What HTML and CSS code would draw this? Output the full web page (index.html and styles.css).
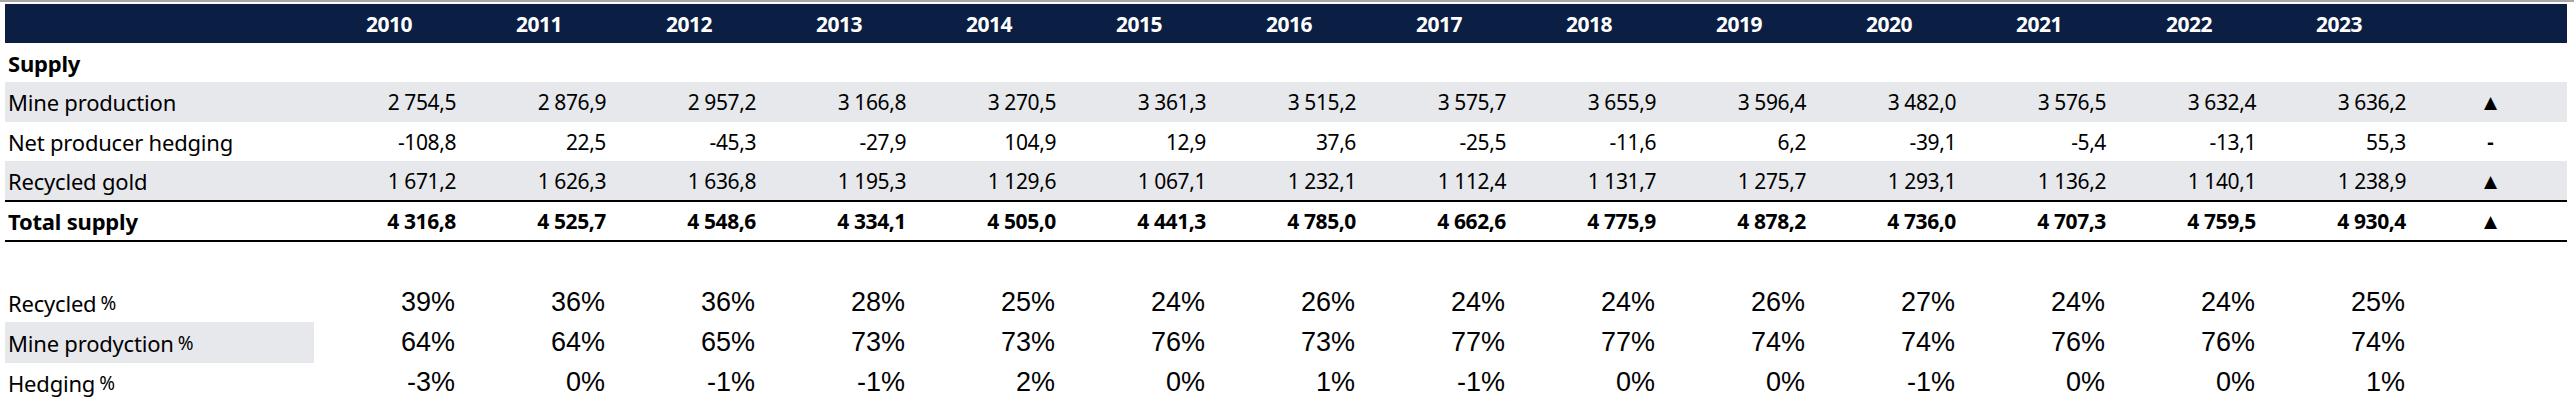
FILE: index.html
```html
<!DOCTYPE html>
<html lang="en">
<head>
<meta charset="utf-8">
<title>Gold supply</title>
<link rel="stylesheet" href="styles.css">
</head>
<body>
<div class="page">
  <div class="table">
    <div class="row head">
      <div class="cell label"></div>
      <div class="cell year">2010</div><div class="cell year">2011</div><div class="cell year">2012</div><div class="cell year">2013</div><div class="cell year">2014</div><div class="cell year">2015</div><div class="cell year">2016</div><div class="cell year">2017</div><div class="cell year">2018</div><div class="cell year">2019</div><div class="cell year">2020</div><div class="cell year">2021</div><div class="cell year">2022</div><div class="cell year">2023</div>
      <div class="cell trend"></div>
    </div>
    <div class="row section">
      <div class="cell label bold">Supply</div>
    </div>
    <div class="row shade tall">
      <div class="cell label">Mine production</div>
      <div class="cell num">2 754,5</div><div class="cell num">2 876,9</div><div class="cell num">2 957,2</div><div class="cell num">3 166,8</div><div class="cell num">3 270,5</div><div class="cell num">3 361,3</div><div class="cell num">3 515,2</div><div class="cell num">3 575,7</div><div class="cell num">3 655,9</div><div class="cell num">3 596,4</div><div class="cell num">3 482,0</div><div class="cell num">3 576,5</div><div class="cell num">3 632,4</div><div class="cell num">3 636,2</div>
      <div class="cell trend">▲</div>
    </div>
    <div class="row">
      <div class="cell label">Net producer hedging</div>
      <div class="cell num">-108,8</div><div class="cell num">22,5</div><div class="cell num">-45,3</div><div class="cell num">-27,9</div><div class="cell num">104,9</div><div class="cell num">12,9</div><div class="cell num">37,6</div><div class="cell num">-25,5</div><div class="cell num">-11,6</div><div class="cell num">6,2</div><div class="cell num">-39,1</div><div class="cell num">-5,4</div><div class="cell num">-13,1</div><div class="cell num">55,3</div>
      <div class="cell trend dash">-</div>
    </div>
    <div class="row shade">
      <div class="cell label">Recycled gold</div>
      <div class="cell num">1 671,2</div><div class="cell num">1 626,3</div><div class="cell num">1 636,8</div><div class="cell num">1 195,3</div><div class="cell num">1 129,6</div><div class="cell num">1 067,1</div><div class="cell num">1 232,1</div><div class="cell num">1 112,4</div><div class="cell num">1 131,7</div><div class="cell num">1 275,7</div><div class="cell num">1 293,1</div><div class="cell num">1 136,2</div><div class="cell num">1 140,1</div><div class="cell num">1 238,9</div>
      <div class="cell trend">▲</div>
    </div>
    <div class="row total">
      <div class="cell label bold">Total supply</div>
      <div class="cell num bold">4 316,8</div><div class="cell num bold">4 525,7</div><div class="cell num bold">4 548,6</div><div class="cell num bold">4 334,1</div><div class="cell num bold">4 505,0</div><div class="cell num bold">4 441,3</div><div class="cell num bold">4 785,0</div><div class="cell num bold">4 662,6</div><div class="cell num bold">4 775,9</div><div class="cell num bold">4 878,2</div><div class="cell num bold">4 736,0</div><div class="cell num bold">4 707,3</div><div class="cell num bold">4 759,5</div><div class="cell num bold">4 930,4</div>
      <div class="cell trend">▲</div>
    </div>
  </div>

  <div class="table pct-table">
    <div class="row">
      <div class="cell label">Recycled <span class="pc">%</span></div>
      <div class="cell pct">39%</div><div class="cell pct">36%</div><div class="cell pct">36%</div><div class="cell pct">28%</div><div class="cell pct">25%</div><div class="cell pct">24%</div><div class="cell pct">26%</div><div class="cell pct">24%</div><div class="cell pct">24%</div><div class="cell pct">26%</div><div class="cell pct">27%</div><div class="cell pct">24%</div><div class="cell pct">24%</div><div class="cell pct">25%</div>
    </div>
    <div class="row">
      <div class="cell label shade">Mine prodyction <span class="pc">%</span></div>
      <div class="cell pct">64%</div><div class="cell pct">64%</div><div class="cell pct">65%</div><div class="cell pct">73%</div><div class="cell pct">73%</div><div class="cell pct">76%</div><div class="cell pct">73%</div><div class="cell pct">77%</div><div class="cell pct">77%</div><div class="cell pct">74%</div><div class="cell pct">74%</div><div class="cell pct">76%</div><div class="cell pct">76%</div><div class="cell pct">74%</div>
    </div>
    <div class="row">
      <div class="cell label">Hedging <span class="pc">%</span></div>
      <div class="cell pct">-3%</div><div class="cell pct">0%</div><div class="cell pct">-1%</div><div class="cell pct">-1%</div><div class="cell pct">2%</div><div class="cell pct">0%</div><div class="cell pct">1%</div><div class="cell pct">-1%</div><div class="cell pct">0%</div><div class="cell pct">0%</div><div class="cell pct">-1%</div><div class="cell pct">0%</div><div class="cell pct">0%</div><div class="cell pct">1%</div>
    </div>
  </div>
</div>
</body>
</html>
```

FILE: styles.css
```css
* { box-sizing: border-box; }
html, body { margin: 0; padding: 0; background: #ffffff; }
body {
  font-family: "Noto Sans", "Open Sans", sans-serif;
  color: #000000;
}
.page {
  border-top: 2px solid #a8a8a8;
  padding: 2px 7px 0 5px;
}
.table {
  width: 2562px;
}
.row {
  display: grid;
  grid-template-columns: 309px repeat(14, 150px) 153px;
  height: 39px;
  align-items: center;
}
.row.tall { height: 40px; }
.row .cell {
  height: 100%;
  display: flex;
  align-items: center;
  white-space: nowrap;
}
.head {
  background: #0b1f45;
  height: 39px;
}
.shade { background: #e7e8ec; }
.label {
  padding-left: 3px;
  font-size: 22px;
  letter-spacing: -0.2px;
}
.bold { font-weight: 700; }
.year {
  justify-content: center;
  color: #ffffff;
  font-weight: 700;
  font-size: 21px;
  font-stretch: semi-condensed;
  letter-spacing: -0.5px;
}
.num {
  justify-content: flex-end;
  padding-right: 8px;
  font-size: 21px;
  font-stretch: semi-condensed;
  letter-spacing: -0.4px;
}
.trend {
  justify-content: center;
  font-family: "DejaVu Sans", sans-serif;
  font-size: 17px;
}
.trend.dash {
  font-family: "Noto Sans", sans-serif;
  font-weight: 700;
  font-size: 20px;
}
.total {
  border-top: 2px solid #000000;
  border-bottom: 2px solid #000000;
  height: 42px;
}
.pct-table {
  margin-top: 41px;
}
.pct-table .row { height: 39px; }
.pct-table .row:nth-child(2) { height: 41px; }
.pct {
  justify-content: flex-end;
  padding-right: 9px;
  font-family: "Liberation Sans", Arial, sans-serif;
  font-size: 27px;
}
.pc { font-size: 19px; margin-left: 4px; }
```
